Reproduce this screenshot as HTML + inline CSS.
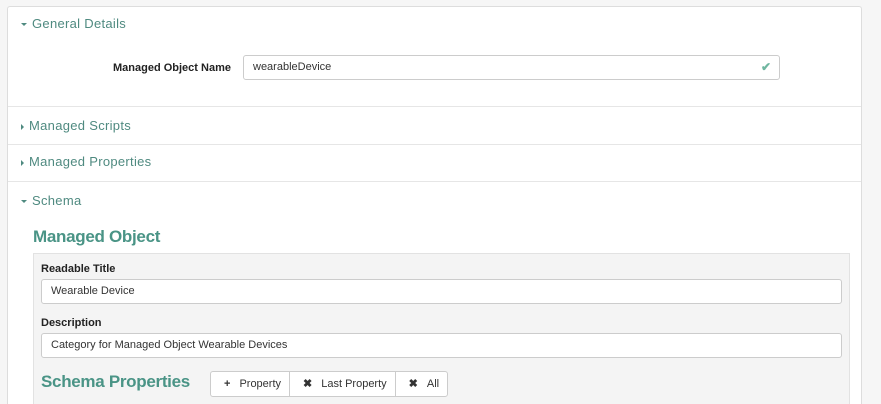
<!DOCTYPE html>
<html style="overflow:hidden;height:404px"><head><style>
body{margin:0;width:881px;height:404px;background:#f6f6f6;font-family:"Liberation Sans",sans-serif;overflow:hidden;position:relative}
.panel{position:absolute;left:7px;top:6px;width:853px;height:398px;background:#fff;border:1px solid #ddd;border-bottom:none;border-radius:3px 3px 0 0;overflow:hidden}
.hd{position:absolute;left:13px;font-size:13px;color:#4f8a80;letter-spacing:.3px}
.hd .c{display:inline-block;width:0;height:0;margin-right:5px;vertical-align:middle}
.dn{border-left:3px solid transparent;border-right:3px solid transparent;border-top:3px solid #4f8a80}
.rt{border-top:3px solid transparent;border-bottom:3px solid transparent;border-left:3px solid #4f8a80}
.line{position:absolute;left:0;right:0;height:1px;background:#e6e6e6}
.lbl{position:absolute;font-size:11px;font-weight:bold;color:#222}
.inp{position:absolute;background:#fff;border:1px solid #ccc;border-radius:3px;box-sizing:border-box;font-size:11px;color:#333;padding-left:9px}
.gray{position:absolute;left:25px;top:246px;width:815px;height:160px;background:#f4f4f4;border:1px solid #e2e2e2}
.big{position:absolute;font-weight:bold;color:#4a9486;font-size:17px;letter-spacing:-0.3px}
.btns{position:absolute;left:202px;top:364px;height:24px;display:flex;border:1px solid #ccc;border-radius:3px;background:#fff}
.btns div{font-size:11px;color:#333;line-height:24px;padding:0 8px 0 13px;border-right:1px solid #ccc}
.btns div:last-child{border-right:none}
.btns b{margin-right:9px}
</style></head><body>
<div class="panel">
<div class="hd" style="top:9px"><span class="c dn"></span>General Details</div>
<div class="lbl" style="left:105px;top:55px">Managed Object Name</div>
<div class="inp" style="left:235px;top:48px;width:537px;height:25px;line-height:23px">wearableDevice<span style="position:absolute;right:8px;color:#6fb6a0;font-size:12px;font-weight:bold">✔</span></div>
<div class="line" style="top:99px"></div>
<div class="hd" style="top:111px"><span class="c rt"></span>Managed Scripts</div>
<div class="line" style="top:137px"></div>
<div class="hd" style="top:147px"><span class="c rt"></span>Managed Properties</div>
<div class="line" style="top:174px"></div>
<div class="hd" style="top:186px"><span class="c dn"></span>Schema</div>
<div class="big" style="left:25px;top:220px">Managed Object</div>
<div class="gray"></div>
<div class="lbl" style="left:33px;top:256px">Readable Title</div>
<div class="inp" style="left:33px;top:272px;width:801px;height:25px;line-height:23px">Wearable Device</div>
<div class="lbl" style="left:33px;top:310px">Description</div>
<div class="inp" style="left:33px;top:326px;width:801px;height:25px;line-height:23px">Category for Managed Object Wearable Devices</div>
<div class="big" style="left:33px;top:365px">Schema Properties</div>
<div class="btns"><div><b>+</b>Property</div><div><b>✖</b>Last Property</div><div><b>✖</b>All</div></div>
</div>
</body></html>
